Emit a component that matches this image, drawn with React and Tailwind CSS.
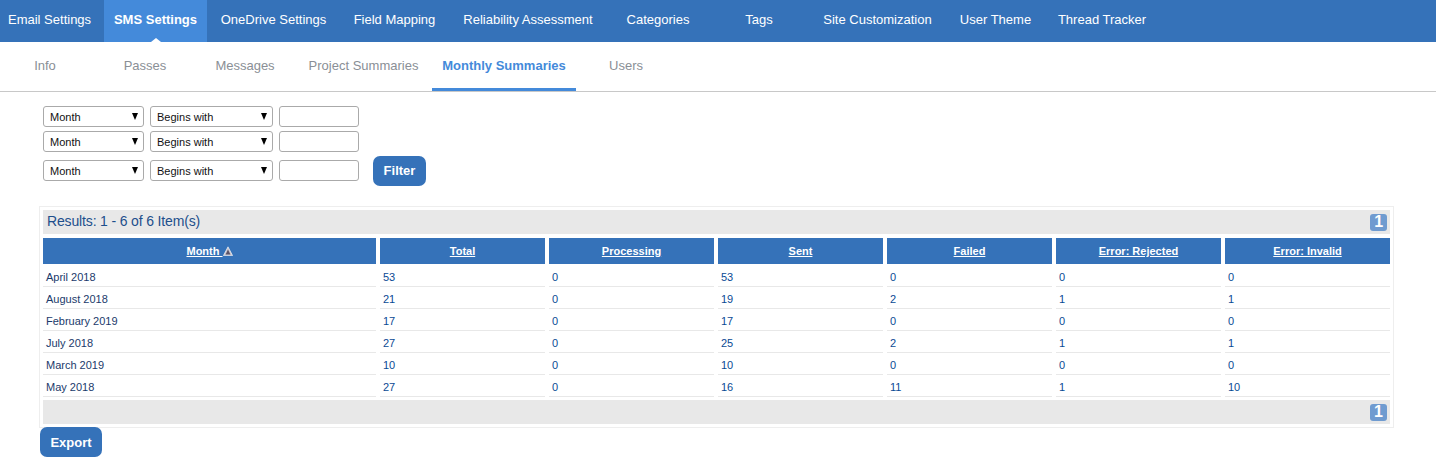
const navItems = [
  { label: 'Email Settings', width: 'w-[104px] justify-start pl-2' },
  { label: 'SMS Settings', width: 'w-[103px] justify-center', active: true },
  { label: 'OneDrive Settings', width: 'w-[133px] justify-center' },
  { label: 'Field Mapping', width: 'w-[109px] justify-center' },
  { label: 'Reliability Assessment', width: 'w-[158px] justify-center' },
  { label: 'Categories', width: 'w-[102px] justify-center' },
  { label: 'Tags', width: 'w-[100px] justify-center' },
  { label: 'Site Customization', width: 'w-[137px] justify-center' },
  { label: 'User Theme', width: 'w-[99px] justify-center' },
  { label: 'Thread Tracker', width: 'w-[114px] justify-center' },
];

const subItems = [
  { label: 'Info', width: 'w-[95px] pr-[5px]' },
  { label: 'Passes', width: 'w-[100px]' },
  { label: 'Messages', width: 'w-[100px]' },
  { label: 'Project Summaries', width: 'w-[137px]' },
  { label: 'Monthly Summaries', width: 'w-[144px]', active: true },
  { label: 'Users', width: 'w-[100px]' },
];

const columns = ['Total', 'Processing', 'Sent', 'Failed', 'Error: Rejected', 'Error: Invalid'];

const rows = [
  ['April 2018', 53, 0, 53, 0, 0, 0],
  ['August 2018', 21, 0, 19, 2, 1, 1],
  ['February 2019', 17, 0, 17, 0, 0, 0],
  ['July 2018', 27, 0, 25, 2, 1, 1],
  ['March 2019', 10, 0, 10, 0, 0, 0],
  ['May 2018', 27, 0, 16, 11, 1, 10],
];

function FilterSelect({ value, width }) {
  return (
    <div className={`relative ${width}`}>
      <select
        defaultValue={value}
        className="block h-[21px] w-full appearance-none rounded-[3px] border border-[#aaaaaa] bg-white pl-[6px] pt-px text-[11px] text-[#111111]"
      >
        <option>{value}</option>
      </select>
      <span className="pointer-events-none absolute right-[6px] top-[7px] h-0 w-0 border-x-[3.5px] border-t-[7px] border-x-transparent border-t-black" />
    </div>
  );
}

function FilterRow({ children, className }) {
  return (
    <div className={`flex items-center gap-[6px] ${className || ''}`}>
      <FilterSelect value="Month" width="w-[101px]" />
      <FilterSelect value="Begins with" width="w-[123px]" />
      <input className="h-[21px] w-[80px] rounded-[3px] border border-[#aaaaaa] bg-white" />
      {children}
    </div>
  );
}

function PageBadge() {
  return (
    <span className="flex h-[17px] w-[17px] items-center justify-center rounded-[3px] bg-[#6f9bd0] text-[16px] font-bold text-white">
      1
    </span>
  );
}

// gray sort arrow with a pale edge
function SortArrow() {
  return (
    <svg width="10" height="10" viewBox="0 0 10 10" className="inline-block align-[-1px]">
      <path d="M5 0.8 L9.6 9.6 H0.4 Z" fill="#c9c4cc" stroke="#ffffff" strokeWidth="0.6" strokeLinejoin="round" />
      <path d="M5 3.5 L7.4 8.4 H2.6 Z" fill="#5c5468" />
    </svg>
  );
}

export default function App() {
  return (
    <div className="min-h-[471px] bg-white font-['Liberation_Sans',Arial,sans-serif]">
      <nav className="flex h-[42px] bg-[#3572b9]">
        {navItems.map((item) => (
          <a
            key={item.label}
            className={`relative flex items-center pb-[2px] text-[13px] text-white ${item.width} ${item.active ? 'bg-[#448ada] font-bold' : ''}`}
          >
            {item.label}
            {item.active && (
              <span className="absolute bottom-0 left-1/2 h-0 w-0 -translate-x-1/2 border-x-[5px] border-b-[4px] border-x-transparent border-b-white" />
            )}
          </a>
        ))}
      </nav>

      <div className="flex h-[50px] border-b border-[#c8c8c8]">
        {subItems.map((item) => (
          <a
            key={item.label}
            className={`flex items-center justify-center text-[13px] ${item.width} ${item.active ? 'border-b-[3px] border-[#448ada] pt-px font-bold text-[#448ada]' : 'pb-[2px] text-[#8a8f96]'}`}
          >
            {item.label}
          </a>
        ))}
      </div>

      <div className="flex flex-col pl-[43px] pt-[14px]">
        <FilterRow />
        <FilterRow className="mt-[4px]" />
        <FilterRow className="mt-[4px] h-[30px] pb-px">
          <button className="ml-[8px] h-[30px] w-[53px] rounded-[7px] bg-[#3572b9] text-[13px] font-bold text-white">
            Filter
          </button>
        </FilterRow>
      </div>

      <div className="ml-[39px] mt-[20px] w-[1355px] border border-[#eeeeee] p-[3px]">
        <div className="flex h-[24px] w-[1347px] items-center justify-between bg-[#e8e8e8] pl-[4px] pr-[3px] text-[14px] tracking-[-0.15px] text-[#1d4f8c]">
          <span className="pb-[2px]">Results: 1 - 6 of 6 Item(s)</span>
          <PageBadge />
        </div>

        <table className="mx-[-4px] mt-[4px] w-[1355px] table-fixed border-separate border-spacing-x-[4px] border-spacing-y-0">
          <colgroup>
            <col className="w-[333px]" />
            <col className="w-[165px]" />
            <col className="w-[165px]" />
            <col className="w-[165px]" />
            <col className="w-[165px]" />
            <col className="w-[165px]" />
            <col className="w-[165px]" />
          </colgroup>
          <thead>
            <tr>
              <th className="h-[27px] border-b border-white bg-[#3572b9] p-0 text-[11px] font-bold text-white">
                <a className="underline">Month </a>
                <SortArrow />
              </th>
              {columns.map((col) => (
                <th
                  key={col}
                  className="h-[27px] border-b border-white bg-[#3572b9] p-0 text-[11px] font-bold text-white"
                >
                  <a className="underline">{col}</a>
                </th>
              ))}
            </tr>
          </thead>
          <tbody>
            {rows.map((row) => (
              <tr key={row[0]}>
                {row.map((value, i) => (
                  <td
                    key={i}
                    className={`h-[22px] border-b border-[#e8e8e8] p-0 pl-[3px] pt-[4px] align-middle text-[11px] ${i === 0 ? 'text-[#1b3a6b]' : 'text-[#0a4a94]'}`}
                  >
                    {value}
                  </td>
                ))}
              </tr>
            ))}
          </tbody>
        </table>

        <div className="mt-[3px] flex h-[24px] w-[1347px] items-center justify-end bg-[#e8e8e8] pr-[3px]">
          <PageBadge />
        </div>
      </div>

      <button className="ml-[40px] mt-[-1px] block h-[30px] w-[62px] rounded-[7px] bg-[#3572b9] pt-px text-[13px] font-bold text-white">
        Export
      </button>
    </div>
  );
}
